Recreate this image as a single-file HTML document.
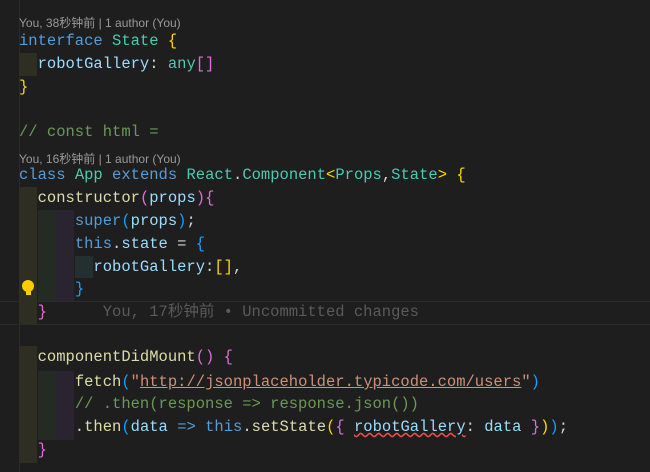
<!DOCTYPE html><html><head><style>
body{margin:0;background:#1e1e1e;width:650px;height:472px;overflow:hidden;position:relative;font-family:"Liberation Mono",monospace;}
.l{position:absolute;left:19px;height:23px;line-height:23px;font-size:15.5px;white-space:pre;color:#d4d4d4;}
.cl{position:absolute;left:19px;font-family:"Liberation Sans","Noto Sans CJK SC",sans-serif;font-size:12px;color:#999;white-space:pre;}
.g{position:absolute;width:18px;}
.k{color:#569cd6}.t{color:#4ec9b0}.p{color:#9cdcfe}.f{color:#dcdcaa}.s{color:#ce9178}.c{color:#6a9955}
.y{color:#ffd700}.m{color:#da70d6}.b{color:#179fff}
</style></head><body>
<div style="position:absolute;left:19px;top:0;width:1px;height:472px;background:#2a2a2a"></div>
<div style="position:absolute;left:0;top:301px;width:650px;height:22px;border-top:1px solid #2c2c2c;border-bottom:1px solid #2c2c2c;"></div>
<!-- guides -->
<div class="g" style="left:19px;top:53px;height:23px;background:#2e2e22"></div>
<div class="g" style="left:19px;top:187px;height:137px;background:#2e2e22"></div>
<div class="g" style="left:38px;top:210px;height:91px;background:#232b22"></div>
<div class="g" style="left:56px;top:210px;height:91px;background:#2a2330"></div>
<div class="g" style="left:75px;top:256px;height:22px;background:#243030"></div>
<div class="g" style="left:19px;top:346px;height:117px;background:#2e2e22"></div>
<div class="g" style="left:38px;top:371px;height:69px;background:#232b22"></div>
<div class="g" style="left:56px;top:371px;height:69px;background:#2a2330"></div>

<div class="cl" style="top:14px">You, 38秒钟前 | 1 author (You)</div>
<div class="l" style="top:30px"><span class="k">interface</span> <span class="t">State</span> <span class="y">{</span></div>
<div class="l" style="top:53px">  <span class="p">robotGallery</span>: <span class="t">any</span><span class="m">[]</span></div>
<div class="l" style="top:76px"><span class="y">}</span></div>
<div class="l" style="top:121px"><span class="c">// const html =</span></div>
<div class="cl" style="top:150px">You, 16秒钟前 | 1 author (You)</div>
<div class="l" style="top:164px"><span class="k">class</span> <span class="t">App</span> <span class="k">extends</span> <span class="t">React</span>.<span class="t">Component</span><span class="y">&lt;</span><span class="t">Props</span>,<span class="t">State</span><span class="y">&gt;</span> <span class="y">{</span></div>
<div class="l" style="top:187px">  <span class="f">constructor</span><span class="m">(</span><span class="p">props</span><span class="m">){</span></div>
<div class="l" style="top:210px">      <span class="k">super</span><span class="b">(</span><span class="p">props</span><span class="b">)</span>;</div>
<div class="l" style="top:233px">      <span class="k">this</span>.<span class="p">state</span> = <span class="b">{</span></div>
<div class="l" style="top:256px">        <span class="p">robotGallery</span>:<span class="y">[]</span>,</div>
<div class="l" style="top:278px">      <span class="b">}</span></div>
<div style="position:absolute;left:22px;top:280px;width:12px;height:12px;border-radius:6px;background:#ffcc00"></div>
<div style="position:absolute;left:26px;top:291px;width:5px;height:4px;background:#ffcc00"></div>
<div class="l" style="top:301px">  <span class="m">}</span>      <span style="color:#5a5a5a;font-family:'Liberation Mono','Noto Sans CJK SC',monospace">You, 17秒钟前 • Uncommitted changes</span></div>
<div class="l" style="top:346px">  <span class="f">componentDidMount</span><span class="m">()</span> <span class="m">{</span></div>
<div class="l" style="top:371px">      <span class="f">fetch</span><span class="b">(</span><span class="s">"<span style="text-decoration:underline;text-decoration-color:#ce9178">http://jsonplaceholder.typicode.com/users</span>"</span><span class="b">)</span></div>
<div class="l" style="top:393px">      <span class="c">// .then(response =&gt; response.json())</span></div>
<div class="l" style="top:416px">      .<span class="f">then</span><span class="b">(</span><span class="p">data</span> <span class="k">=&gt;</span> <span class="k">this</span>.<span class="f">setState</span><span class="y">(</span><span class="m">{</span> <span class="p" style="text-decoration:underline wavy #f14c4c">robotGallery</span>: <span class="p">data</span> <span class="m">}</span><span class="y">)</span><span class="b">)</span>;</div>
<div class="l" style="top:439px">  <span class="m">}</span></div>
</body></html>
